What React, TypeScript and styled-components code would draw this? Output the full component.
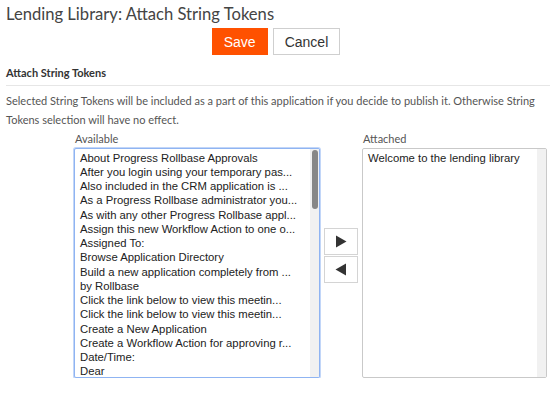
import React from 'react';
import styled, { createGlobalStyle } from 'styled-components';

const GlobalStyle = createGlobalStyle`
  html, body {
    margin: 0;
    padding: 0;
    background: #fff;
  }
  body {
    font-family: Lato, "Open Sans", sans-serif;
    color: #444;
  }
`;

const Page = styled.div`
  width: 550px;
  padding: 0 0 0 6px;
  box-sizing: border-box;
`;

const Title = styled.h1`
  margin: 0;
  padding-top: 3px;
  font-size: 16.6px;
  line-height: 22px;
  font-weight: 400;
  color: #444;
`;

const Toolbar = styled.div`
  display: flex;
  justify-content: center;
  gap: 5px;
  margin-top: 3px;
  padding-right: 4px;
`;

const Button = styled.button<{ $primary?: boolean }>`
  height: 27px;
  padding: 0 11px;
  font-family: "Liberation Sans", Arial, sans-serif;
  font-size: 14px;
  border: 1px solid ${(p) => (p.$primary ? '#ff5100' : '#cfcfcf')};
  background: ${(p) => (p.$primary ? '#ff5100' : '#fff')};
  color: ${(p) => (p.$primary ? '#fff' : '#333')};
  border-radius: 0;
  cursor: pointer;
`;

const SectionHeader = styled.h2`
  margin: 11px 0 0;
  padding-bottom: 5px;
  font-size: 11px;
  line-height: 14px;
  font-weight: 700;
  color: #333;
  border-bottom: 1px solid #e6e6e6;
`;

const Note = styled.p`
  margin: 5px 0 0;
  font-size: 11px;
  line-height: 19px;
  color: #555;
  padding-right: 10px;
`;

const Picker = styled.div`
  display: flex;
  align-items: center;
  gap: 4px;
  margin-top: 2px;
  padding-left: 68px;
`;

const Column = styled.div<{ $width: number }>`
  display: flex;
  flex-direction: column;
  width: ${(p) => p.$width}px;
`;

const Label = styled.div`
  font-size: 11px;
  line-height: 16px;
  color: #555;
  padding-left: 1px;
  margin-bottom: 1px;
`;

const ListBox = styled.div<{ $focused?: boolean }>`
  display: flex;
  height: 230px;
  box-sizing: border-box;
  border: 1px solid ${(p) => (p.$focused ? '#8fb4f2' : '#c9c9c9')};
  box-shadow: ${(p) => (p.$focused ? '0 0 0 1px #c2d6f8' : 'none')};
  border-radius: 2px;
  background: #fff;
  overflow: hidden;
`;

const Items = styled.ul`
  flex: 1;
  margin: 0;
  padding: 1.5px 0 0 5px;
  list-style: none;
  font-family: "Liberation Sans", Arial, sans-serif;
  font-size: 11.3px;
  line-height: 14.25px;
  color: #222;
`;

const Item = styled.li`
  white-space: nowrap;
`;

const Track = styled.div`
  width: 9px;
  background: #f1f1f1;
  display: flex;
  justify-content: center;
  padding-top: 1px;
`;

const Thumb = styled.div`
  width: 6px;
  height: 59px;
  border-radius: 3px;
  background: #878787;
`;

const Arrows = styled.div`
  display: flex;
  flex-direction: column;
  gap: 1px;
  margin-top: 2px;
`;

const ArrowButton = styled.button`
  width: 34px;
  height: 27px;
  box-sizing: border-box;
  padding: 0;
  border: 1px solid #d4d4d4;
  background: #fff;
  display: flex;
  align-items: center;
  justify-content: center;
  cursor: pointer;
`;

const available = [
  'About Progress Rollbase Approvals',
  'After you login using your temporary pas...',
  'Also included in the CRM application is ...',
  'As a Progress Rollbase administrator you...',
  'As with any other Progress Rollbase appl...',
  'Assign this new Workflow Action to one o...',
  'Assigned To:',
  'Browse Application Directory',
  'Build a new application completely from ...',
  'by Rollbase',
  'Click the link below to view this meetin...',
  'Click the link below to view this meetin...',
  'Create a New Application',
  'Create a Workflow Action for approving r...',
  'Date/Time:',
  'Dear',
];

const attached = ['Welcome to the lending library'];

const Triangle = ({ dir }: { dir: 'right' | 'left' }) => (
  <svg width="12" height="13" viewBox="0 0 12 13">
    <path d={dir === 'right' ? 'M1 0.5 L11.5 6.5 L1 12.5 Z' : 'M11 0.5 L0.5 6.5 L11 12.5 Z'} fill="#333" />
  </svg>
);

export default function App() {
  return (
    <Page>
      <GlobalStyle />
      <Title>Lending Library: Attach String Tokens</Title>
      <Toolbar>
        <Button $primary>Save</Button>
        <Button>Cancel</Button>
      </Toolbar>
      <SectionHeader>Attach String Tokens</SectionHeader>
      <Note>
        Selected String Tokens will be included as a part of this application if you decide to publish it. Otherwise
        String Tokens selection will have no effect.
      </Note>
      <Picker>
        <Column $width={246}>
          <Label>Available</Label>
          <ListBox $focused>
            <Items>
              {available.map((t, i) => (
                <Item key={i}>{t}</Item>
              ))}
            </Items>
            <Track>
              <Thumb />
            </Track>
          </ListBox>
        </Column>
        <Arrows>
          <ArrowButton aria-label="Add">
            <Triangle dir="right" />
          </ArrowButton>
          <ArrowButton aria-label="Remove">
            <Triangle dir="left" />
          </ArrowButton>
        </Arrows>
        <Column $width={185}>
          <Label>Attached</Label>
          <ListBox>
            <Items>
              {attached.map((t, i) => (
                <Item key={i}>{t}</Item>
              ))}
            </Items>
            <Track />
          </ListBox>
        </Column>
      </Picker>
    </Page>
  );
}
